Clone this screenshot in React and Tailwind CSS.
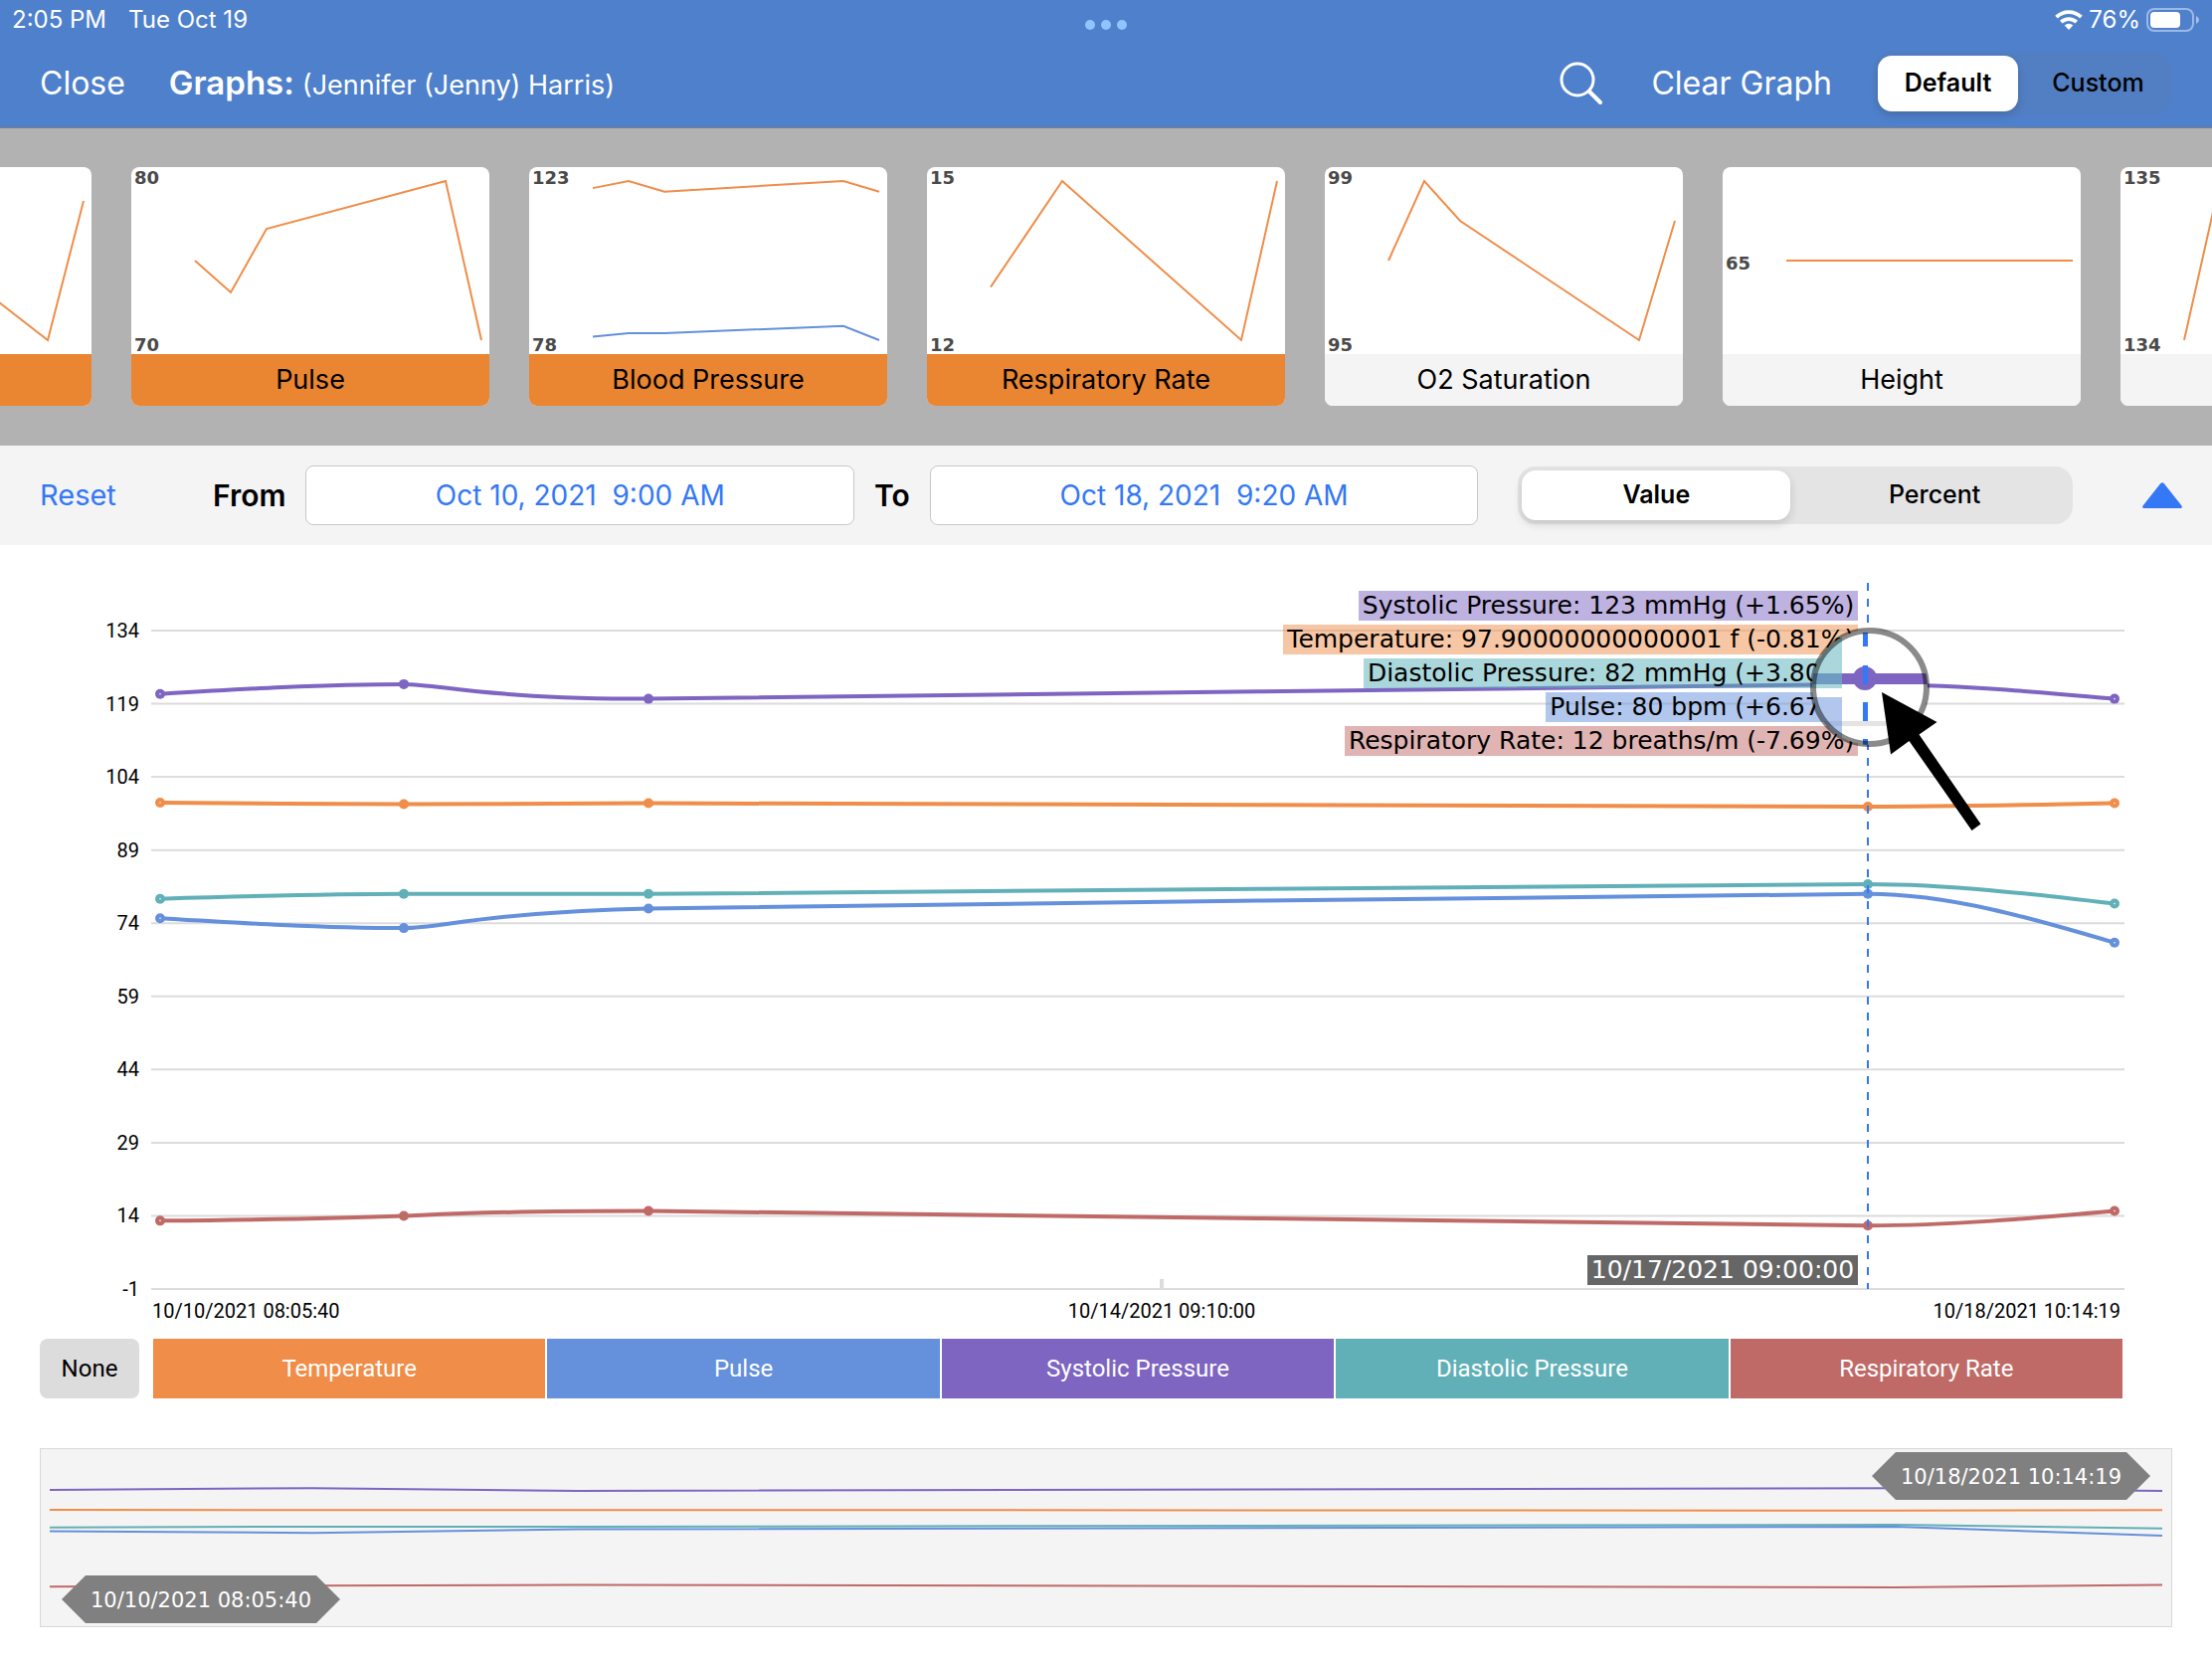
import React, { useState } from 'react';

const SERIES = [
  { name: 'Systolic Pressure', color: '#7d65c1', values: [121, 123, 120, 123, 120] },
  { name: 'Temperature', color: '#ef8d49', values: [98.7, 98.4, 98.6, 97.9, 98.6] },
  { name: 'Diastolic Pressure', color: '#61b0b7', values: [79, 80, 80, 82, 78] },
  { name: 'Pulse', color: '#6490dc', values: [75, 73, 77, 80, 70] },
  { name: 'Respiratory Rate', color: '#bf6a67', values: [13, 14, 15, 12, 15] }
];

const THUMBNAILS = [
  { name: 'Temperature', lines: [[98.7, 98.4, 98.6, 97.9, 98.6]], min: 97.9, max: 98.7, selected: true },
  { name: 'Pulse', lines: [[75, 73, 77, 80, 70]], min: 70, max: 80, selected: true },
  { name: 'Blood Pressure', lines: [[121, 123, 120, 123, 120], [79, 80, 80, 82, 78]], min: 78, max: 123, selected: true },
  { name: 'Respiratory Rate', lines: [[13, 14, 15, 12, 15]], min: 12, max: 15, selected: true },
  { name: 'O2 Saturation', lines: [[97, 99, 98, 95, 98]], min: 95, max: 99, selected: false },
  { name: 'Height', lines: [[65, 65, 65, 65, 65]], min: 65, max: 65, selected: false },
  { name: 'Weight', lines: [[134, 135, 135, 134, 134]], min: 134, max: 135, selected: false }
];

const READINGS = [
  { text: 'Systolic Pressure: 123 mmHg (+1.65%)', className: 'bg-[#7d65c1]/50' },
  { text: 'Temperature: 97.90000000000001 f (-0.81%)', className: 'bg-[#ef8d49]/50' },
  { text: 'Diastolic Pressure: 82 mmHg (+3.80%)', className: 'bg-[#55afb7]/50' },
  { text: 'Pulse: 80 bpm (+6.67%)', className: 'bg-[#6490dc]/50' },
  { text: 'Respiratory Rate: 12 breaths/m (-7.69%)', className: 'bg-[#bf6a67]/50' }
];

const LEGEND = [
  { name: 'Temperature', className: 'bg-[#ef8d49]' },
  { name: 'Pulse', className: 'bg-[#6490dc]' },
  { name: 'Systolic Pressure', className: 'bg-[#7d65c1]' },
  { name: 'Diastolic Pressure', className: 'bg-[#61b0b7]' },
  { name: 'Respiratory Rate', className: 'bg-[#bf6a67]' }
];

const TICKS = [134, 119, 104, 89, 74, 59, 44, 29, 14, -1];
const XS = [161, 406, 652, 1878, 2126];
// where the two bezier handles sit along each segment
const HANDLES = [[0.33, 0.67], [0.15, 0.33], [0.05, 0.95], [0.33, 0.67]];

const chartY = (value) => 748 - (value + 1) * 4.904;

const getSlopes = (ys) => {
  const secants = ys.slice(1).map((y, i) => (y - ys[i]) / (XS[i + 1] - XS[i]));
  const slopes = ys.map((y, i) => {
    if (i === 0 || i === ys.length - 1) return 0;
    const a = secants[i - 1];
    const b = secants[i];
    return a * b <= 0 ? 0 : 2 * Math.sign(a) * Math.min(Math.abs(a), Math.abs(b));
  });
  slopes[0] = (3 * secants[0] - slopes[1]) / 2;
  slopes[4] = (3 * secants[3] - slopes[3]) / 2;
  return slopes;
};

const curvePath = (values) => {
  const ys = values.map(chartY);
  const slopes = getSlopes(ys);
  let d = `M${XS[0]} ${ys[0]}`;
  for (let i = 0; i < XS.length - 1; i++) {
    const width = XS[i + 1] - XS[i];
    const x1 = width * HANDLES[i][0];
    const x2 = width * (1 - HANDLES[i][1]);
    d += `C${XS[i] + x1} ${ys[i] + slopes[i] * x1} ${XS[i + 1] - x2} ${ys[i + 1] - slopes[i + 1] * x2} ${XS[i + 1]} ${ys[i + 1]}`;
  }
  return d;
};

const SegmentedControl = ({ options, value, onChange, label, className, itemClassName }) => (
  <div role="group" aria-label={label} className={`grid grid-cols-2 gap-[10px] p-1 ${className}`}>
    {options.map((option) => (
      <button
        key={option}
        type="button"
        aria-pressed={option === value}
        onClick={() => onChange(option)}
        className={`text-[25px] text-black ${itemClassName} ${
          option === value ? 'bg-white font-semibold shadow-[0_4px_10px_rgba(0,0,0,0.14)]' : 'font-medium'
        }`}
      >
        {option}
      </button>
    ))}
  </div>
);

const StatusBar = () => (
  <div className="grid h-10 grid-cols-3 items-center pl-3 pr-3 text-2xl">
    <div className="flex gap-[22px]">
      <span>2:05 PM</span>
      <span>Tue Oct 19</span>
    </div>
    <div className="flex justify-center gap-[6px] pt-[10px]">
      <span className="size-[10px] rounded-full bg-[#91c4ff]" />
      <span className="size-[10px] rounded-full bg-[#91c4ff]" />
      <span className="size-[10px] rounded-full bg-[#91c4ff]" />
    </div>
    <div className="flex items-center justify-end gap-[6px]">
      <svg width="28" height="20" viewBox="0 0 28 20" fill="none" stroke="white" strokeWidth="3.8">
        <path d="M1.5 7.2a18 18 0 0 1 25 0" />
        <path d="M6.3 12.2a11 11 0 0 1 15.400 0" />
        <path d="M14 20l-4.300-4.500a6.200 6.200 0 0 1 8.600 0z" fill="white" stroke="none" />
      </svg>
      <span>76%</span>
      <svg width="54" height="24" viewBox="0 0 54 24">
        <rect x="1" y="1" width="46" height="22" rx="7" fill="none" stroke="white" strokeOpacity="0.45" strokeWidth="2" />
        <rect x="4" y="4" width="30" height="16" rx="4" fill="white" />
        <path d="M50 8q3 1.500 3 4t-3 4z" fill="white" fillOpacity="0.5" />
      </svg>
    </div>
  </div>
);

const Header = () => {
  const [mode, setMode] = useState('Default');

  return (
    <header className="border-b border-[#808080] bg-[#4e80cc] text-white">
      <StatusBar />
      <div className="flex h-[88px] items-center px-10">
        <button type="button" className="text-[32px]">Close</button>
        <h1 className="ml-[44px] flex items-baseline gap-2">
          <span className="text-[33px] font-semibold">Graphs:</span>
          <span className="text-[27px]">(Jennifer (Jenny) Harris)</span>
        </h1>
        <button type="button" aria-label="Search" className="ml-auto">
          <svg width="44" height="44" viewBox="0 0 44 44" fill="none" stroke="white" strokeWidth="3">
            <circle cx="18" cy="18" r="16" />
            <path d="M30 30l11 11" strokeWidth="4" strokeLinecap="round" />
          </svg>
        </button>
        <button type="button" className="ml-[48px] text-[32px]">Clear Graph</button>
        <SegmentedControl
          label="Graph mode"
          options={['Default', 'Custom']}
          value={mode}
          onChange={setMode}
          className="ml-[42px] w-[300px] rounded-[18px] bg-[#767680]/12"
          itemClassName="h-14 rounded-[14px]"
        />
      </div>
    </header>
  );
};

const Thumbnail = ({ name, lines, min, max, selected }) => {
  const colors = ['#ef8d49', '#6490dc'];
  const xs = [64, 100, 136, 316, 352];
  const toY = (value) => (max === min ? 94 : 14 + ((max - value) / (max - min)) * 160);

  return (
    <button type="button" aria-pressed={selected} className="w-[360px] shrink-0 overflow-hidden rounded-lg bg-white">
      <svg viewBox="0 0 360 188" className="block w-full">
        {lines.map((line, i) => (
          <polyline
            key={i}
            points={line.map((value, j) => `${xs[j]},${toY(value)}`).join(' ')}
            fill="none"
            stroke={colors[i]}
            strokeWidth="2"
          />
        ))}
        <g className="fill-[#4a4a4a] font-['DejaVu_Sans',sans-serif] text-lg font-bold">
          {max === min ? (
            <text x="3" y="103">{max}</text>
          ) : (
            <>
              <text x="3" y="17">{max}</text>
              <text x="3" y="185">{min}</text>
            </>
          )}
        </g>
      </svg>
      <span className={`flex h-[52px] items-center justify-center text-[27px] text-black ${selected ? 'bg-[#ea8532]' : 'bg-[#f4f4f4]'}`}>
        {name}
      </span>
    </button>
  );
};

const DateField = ({ id, label, value, onChange }) => (
  <>
    <label htmlFor={id} className="text-[30px] font-semibold text-black">{label}</label>
    <input
      id={id}
      type="text"
      value={value}
      onChange={(e) => onChange(e.target.value)}
      className="h-[60px] min-w-0 flex-1 rounded-lg border border-[#c8c8c8] bg-white text-center text-[28px] text-[#3478f6]"
    />
  </>
);

const Toolbar = () => {
  const [from, setFrom] = useState('Oct 10, 2021  9:00 AM');
  const [to, setTo] = useState('Oct 18, 2021  9:20 AM');
  const [unit, setUnit] = useState('Value');

  return (
    <div className="flex h-[100px] items-center gap-5 bg-[#f4f4f4] pl-10 pr-[30px]">
      <button type="button" className="w-[154px] text-left text-[29px] text-[#3478f6]">Reset</button>
      <DateField id="from" label="From" value={from} onChange={setFrom} />
      <DateField id="to" label="To" value={to} onChange={setTo} />
      <SegmentedControl
        label="Unit"
        options={['Value', 'Percent']}
        value={unit}
        onChange={setUnit}
        className="ml-5 flex-1 rounded-[18px] bg-[#e4e4e5]"
        itemClassName="h-[50px] rounded-[14px]"
      />
      <button type="button" aria-label="Collapse" className="ml-[50px]">
        <svg width="40" height="26" viewBox="0 0 40 26" fill="#3478f6">
          <path d="M18.300 1q1.700-1.500 3.400 0l17.800 22.500q1 2.500-1 2.500h-37q-2 0-1-2.500z" />
        </svg>
      </button>
    </div>
  );
};

const Magnifier = () => (
  <>
    <clipPath id="lens">
      <circle cx="1880" cy="143" r="58" />
    </clipPath>
    <g clipPath="url(#lens)">
      <circle cx="1880" cy="143" r="58" fill="white" />
      <rect x="1822" y="177" width="116" height="5" fill="#e4e4e4" />
      <rect x="1822" y="129" width="116" height="11" fill="#7d65c1" />
      <circle cx="1875" cy="134" r="12" fill="#7d65c1" />
      <rect x="1820" y="85" width="32" height="59" fill="#55afb7" fillOpacity="0.5" />
      <rect x="1820" y="129" width="32" height="11" fill="#6f9bc2" />
      <rect x="1820" y="153" width="32" height="60" fill="#6490dc" fillOpacity="0.5" />
      <path d="M1875.500 88v14M1875.500 121v19M1875.500 158v19M1875.500 195v10" stroke="#3478f6" strokeWidth="5" />
    </g>
    <circle cx="1880" cy="143" r="57" fill="none" stroke="black" strokeOpacity="0.46" strokeWidth="6" />
    <path d="M1892 148l55.500 30-18 12.500 62 90-9 6.500-63-90-18.500 13.500z" fill="black" />
  </>
);

const Chart = () => (
  <div className="relative">
    <svg viewBox="0 0 2224 788" className="block w-full">
      <g stroke="#dcdcdc" strokeWidth="2">
        {TICKS.map((tick) => (
          <line key={tick} x1="152" x2="2136" y1={chartY(tick)} y2={chartY(tick)} />
        ))}
        <line x1="1168" x2="1168" y1="738" y2="748" strokeWidth="4" />
      </g>
      <g className="fill-black font-['Roboto',sans-serif] text-xl">
        {TICKS.map((tick) => (
          <text key={tick} x="140" y={chartY(tick) + 7} textAnchor="end">{tick}</text>
        ))}
        <text x="153" y="777">10/10/2021 08:05:40</text>
        <text x="1168" y="777" textAnchor="middle">10/14/2021 09:10:00</text>
        <text x="2132" y="777" textAnchor="end">10/18/2021 10:14:19</text>
      </g>
      {SERIES.map(({ name, color, values }) => (
        <g key={name}>
          <path d={curvePath(values)} fill="none" stroke={color} strokeWidth="4" />
          {values.map((value, i) => (
            <circle key={i} cx={XS[i]} cy={chartY(value)} r="5" fill={color} />
          ))}
          <circle cx={XS[0]} cy={chartY(values[0])} r="0.8" fill="white" />
          <circle cx={XS[4]} cy={chartY(values[4])} r="0.8" fill="white" />
        </g>
      ))}
      <line x1="1878" x2="1878" y1="38" y2="748" stroke="#3478f6" strokeWidth="2" strokeDasharray="8 8" />
    </svg>

    <div className="absolute right-[16%] top-[46px] flex flex-col items-end gap-1 font-['DejaVu_Sans',sans-serif] text-[25px] text-black">
      {READINGS.map(({ text, className }) => (
        <span key={text} className={`h-[30px] px-1 leading-[30px] ${className}`}>{text}</span>
      ))}
    </div>
    <span className="absolute bottom-[44px] right-[16%] h-[30px] bg-[#666] px-1 font-['DejaVu_Sans',sans-serif] text-[25px] leading-[30px] text-white">
      10/17/2021 09:00:00
    </span>

    <svg viewBox="0 0 2224 788" className="pointer-events-none absolute inset-0 w-full">
      <Magnifier />
    </svg>
  </div>
);

const Legend = () => (
  <div className="mt-[10px] flex h-[60px] gap-[14px] pl-10 pr-[90px] font-['Roboto',sans-serif] text-2xl">
    <button type="button" className="w-[100px] rounded-lg bg-[#dcdcdc] text-black">None</button>
    <div className="grid flex-1 grid-cols-5 gap-[2px]">
      {LEGEND.map(({ name, className }) => (
        <button key={name} type="button" className={`text-white ${className}`}>{name}</button>
      ))}
    </div>
  </div>
);

const RangeHandle = ({ x, y, text }) => (
  <g transform={`translate(${x} ${y})`}>
    <path d="M0 24L24 0h232l24 24-24 24H24z" fill="#808080" />
    <text x="140" y="32" textAnchor="middle" fill="white" className="font-['DejaVu_Sans',sans-serif] text-[21px]">{text}</text>
  </g>
);

const Navigator = () => {
  const toX = (x) => 9 + ((x - 161) / 1965) * 2124;
  const toY = (value) => 41 + (121 - value) * 0.9;

  return (
    <div className="mx-10 mb-8 mt-[50px] border border-[#d8d8d8] bg-[#f4f4f4]">
      <svg viewBox="0 0 2142 178" className="block w-full">
        {SERIES.map(({ name, color, values }) => (
          <polyline
            key={name}
            points={values.map((value, i) => `${toX(XS[i])},${toY(value)}`).join(' ')}
            fill="none"
            stroke={color}
            strokeWidth="2"
          />
        ))}
        <RangeHandle x={21} y={127} text="10/10/2021 08:05:40" />
        <RangeHandle x={1841} y={3} text="10/18/2021 10:14:19" />
      </svg>
    </div>
  );
};

const App = () => (
  <div className="min-h-screen overflow-hidden bg-white font-['Inter',sans-serif]">
    <Header />
    <section className="overflow-hidden bg-[#b2b2b2] pb-10 pt-[39px]">
      <div className="-ml-[268px] flex gap-10">
        {THUMBNAILS.map((thumbnail) => (
          <Thumbnail key={thumbnail.name} {...thumbnail} />
        ))}
      </div>
    </section>
    <Toolbar />
    <main>
      <Chart />
      <Legend />
      <Navigator />
    </main>
  </div>
);

export default App;
